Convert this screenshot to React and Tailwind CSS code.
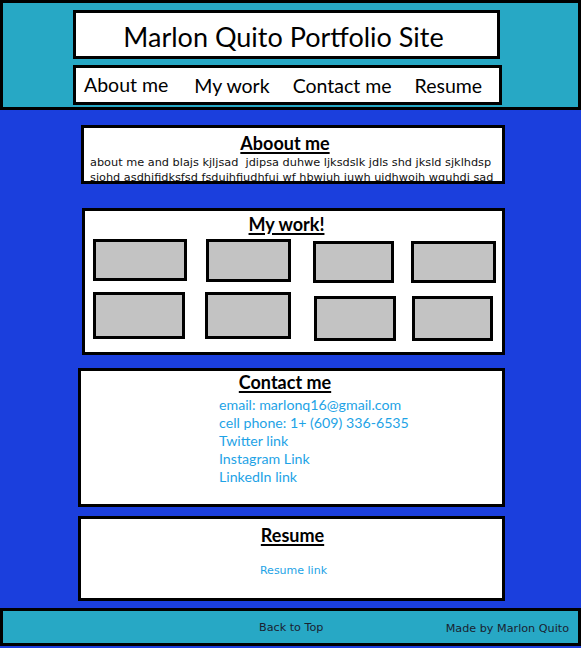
export default function App() {
  const cal = { fontFamily: 'Lato, "Open Sans", sans-serif' };
  const tah = { fontFamily: '"DejaVu Sans", "Noto Sans", sans-serif' };
  const Gray = ({ cls }) => (
    <div className={"shrink-0 border-[3px] border-black bg-[#c3c3c3] " + cls} />
  );
  return (
    <div className="w-[581px] h-[648px] bg-[#1b3fdd] flex flex-col overflow-hidden" style={cal}>
      {/* header */}
      <div className="h-[110px] shrink-0 border-[3px] border-black bg-[#27a8c5] flex flex-col">
        <div className="ml-[70px] mt-[7px] w-[427px] h-[49px] border-[3px] border-black bg-white flex items-center justify-center">
          <span className="text-[27px] text-black leading-none mt-[3px] mr-[6px]">Marlon Quito Portfolio Site</span>
        </div>
        <div className="ml-[70px] mt-[6px] w-[429px] h-[40px] border-[3px] border-black bg-white flex items-center text-[19.5px] text-black leading-none">
          <span className="ml-[8px]">About me</span>
          <span className="ml-[26px] mt-[2px]">My work</span>
          <span className="ml-[23px] mt-[2px]">Contact me</span>
          <span className="ml-[23px] mt-[2px]">Resume</span>
        </div>
      </div>

      {/* about */}
      <div className="ml-[81px] mt-[15px] w-[424px] h-[59px] shrink-0 border-[3px] border-black bg-white flex flex-col items-center overflow-hidden">
        <h2 className="mt-[5px] mr-[16px] text-[18px] font-bold leading-[20px] underline underline-offset-[2px] decoration-[2px] text-black">Aboout me</h2>
        <p className="self-stretch pl-[6px] mt-[2px] text-[11.3px] leading-[15px] text-[#111] whitespace-nowrap text-left" style={tah}>
          about me and blajs kjljsad&nbsp; jdipsa duhwe ljksdslk jdls shd jksld sjklhdsp
          <br />
          siohd asdhifidksfsd fsduihfiudhfui wf hbwiuh iuwh uidhwoih wguhdi sad
        </p>
      </div>

      {/* my work */}
      <div className="ml-[82px] mt-[24px] w-[423px] h-[147px] shrink-0 border-[3px] border-black bg-white flex flex-col">
        <h2 className="self-center mt-[3px] mr-[14px] text-[18px] font-bold leading-[20px] underline underline-offset-[2px] decoration-[2px] text-black">My work!</h2>
        <div className="mt-[5px] h-[44px] flex items-start">
          <Gray cls="ml-[8px] w-[94px] h-[42px]" />
          <Gray cls="ml-[19px] w-[85px] h-[43px]" />
          <Gray cls="ml-[22px] mt-[2px] w-[81px] h-[42px]" />
          <Gray cls="ml-[17px] mt-[2px] w-[85px] h-[42px]" />
        </div>
        <div className="mt-[9px] flex items-start">
          <Gray cls="ml-[8px] w-[92px] h-[47px]" />
          <Gray cls="ml-[20px] w-[86px] h-[47px]" />
          <Gray cls="ml-[23px] mt-[4px] w-[82px] h-[45px]" />
          <Gray cls="ml-[16px] mt-[4px] w-[81px] h-[45px]" />
        </div>
      </div>

      {/* contact */}
      <div className="ml-[78px] mt-[13px] w-[427px] h-[139px] shrink-0 border-[3px] border-black bg-white flex flex-col">
        <h2 className="self-center mt-[1px] ml-[-13px] text-[18px] font-bold leading-[20px] underline underline-offset-[2px] decoration-[2px] text-black">Contact me</h2>
        <div className="ml-[138px] mt-[4px] flex flex-col text-[14.2px] leading-[18px] text-[#1ea3e6]">
          <span>email: marlonq16@gmail.com</span>
          <span>cell phone: 1+ (609) 336-6535</span>
          <span>Twitter link</span>
          <span>Instagram Link</span>
          <span>LinkedIn link</span>
        </div>
      </div>

      {/* resume */}
      <div className="ml-[78px] mt-[9px] w-[427px] h-[85px] shrink-0 border-[3px] border-black bg-white flex flex-col items-center">
        <h2 className="mt-[6px] ml-[2px] text-[18px] font-bold leading-[20px] underline underline-offset-[2px] decoration-[2px] text-black">Resume</h2>
        <span className="mt-[19px] ml-[4px] text-[11px] leading-[14px] text-[#1ea3e6]" style={tah}>Resume link</span>
      </div>

      {/* footer */}
      <div className="mt-[7px] h-[38px] shrink-0 border-[3px] border-black bg-[#27a8c5] flex items-center text-[11.2px] text-[#1a2230]" style={tah}>
        <span className="ml-[256px] mt-[3px]">Back to Top</span>
        <span className="ml-auto mr-[9px] mt-[5px]">Made by Marlon Quito</span>
      </div>
    </div>
  );
}
